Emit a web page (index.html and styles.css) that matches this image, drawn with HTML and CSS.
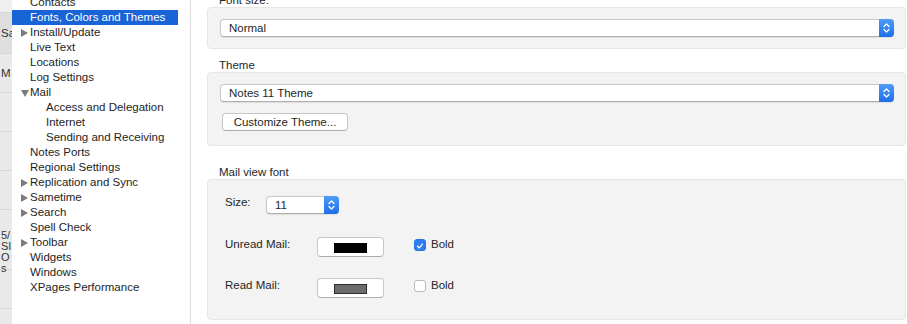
FILE: index.html
```html
<!DOCTYPE html>
<html>
	<head>
		<meta charset="utf-8">
		<title>Preferences</title>
		<link rel="stylesheet" href="styles.css">
	</head>
	<body>
		<div class="window">

			<!-- edge of the window behind -->
			<div class="behind">
				<div class="behind-row top"></div>
				<div class="behind-row tall"><span>Sa</span></div>
				<div class="behind-row"><span>M</span></div>
				<div class="behind-row"></div>
				<div class="behind-row"></div>
				<div class="behind-row"></div>
				<div class="behind-row text-block">
					<span>5/</span><span>SI</span><span>O</span><span>s</span>
				</div>
				<div class="behind-row"></div>
			</div>

			<nav class="tree">
				<div class="tree-row"><span class="twisty"></span>Contacts</div>
				<div class="tree-row selected"><span class="twisty"></span>Fonts, Colors and Themes</div>
				<div class="tree-row"><span class="twisty closed"></span>Install/Update</div>
				<div class="tree-row"><span class="twisty"></span>Live Text</div>
				<div class="tree-row"><span class="twisty"></span>Locations</div>
				<div class="tree-row"><span class="twisty"></span>Log Settings</div>
				<div class="tree-row"><span class="twisty open"></span>Mail</div>
				<div class="tree-row child"><span class="twisty"></span>Access and Delegation</div>
				<div class="tree-row child"><span class="twisty"></span>Internet</div>
				<div class="tree-row child"><span class="twisty"></span>Sending and Receiving</div>
				<div class="tree-row"><span class="twisty"></span>Notes Ports</div>
				<div class="tree-row"><span class="twisty"></span>Regional Settings</div>
				<div class="tree-row"><span class="twisty closed"></span>Replication and Sync</div>
				<div class="tree-row"><span class="twisty closed"></span>Sametime</div>
				<div class="tree-row"><span class="twisty closed"></span>Search</div>
				<div class="tree-row"><span class="twisty"></span>Spell Check</div>
				<div class="tree-row"><span class="twisty closed"></span>Toolbar</div>
				<div class="tree-row"><span class="twisty"></span>Widgets</div>
				<div class="tree-row"><span class="twisty"></span>Windows</div>
				<div class="tree-row"><span class="twisty"></span>XPages Performance</div>
			</nav>

			<main class="prefs">

				<section class="group">
					<div class="group-label">Font size:</div>
					<div class="group-box box-font">
						<div class="popup">
							<span class="popup-text">Normal</span>
							<span class="stepper">
								<svg width="15" height="18" viewBox="0 0 15 18"><path d="M5 7.5 L7.5 5 L10 7.5 M5 10.5 L7.5 13 L10 10.5" fill="none" stroke="#fff" stroke-width="1.3" stroke-linecap="round" stroke-linejoin="round"/></svg>
							</span>
						</div>
					</div>
				</section>

				<section class="group">
					<div class="group-label">Theme</div>
					<div class="group-box box-theme">
						<div class="popup">
							<span class="popup-text">Notes 11 Theme</span>
							<span class="stepper">
								<svg width="15" height="18" viewBox="0 0 15 18"><path d="M5 7.5 L7.5 5 L10 7.5 M5 10.5 L7.5 13 L10 10.5" fill="none" stroke="#fff" stroke-width="1.3" stroke-linecap="round" stroke-linejoin="round"/></svg>
							</span>
						</div>
						<div class="push-btn">Customize Theme...</div>
					</div>
				</section>

				<section class="group group-far">
					<div class="group-label">Mail view font</div>
					<div class="group-box box-mail">
						<div class="mail-row">
							<span class="row-label size-label">Size:</span>
							<div class="popup popup-small">
								<span class="popup-text">11</span>
								<span class="stepper">
									<svg width="15" height="18" viewBox="0 0 15 18"><path d="M5 7.5 L7.5 5 L10 7.5 M5 10.5 L7.5 13 L10 10.5" fill="none" stroke="#fff" stroke-width="1.3" stroke-linecap="round" stroke-linejoin="round"/></svg>
								</span>
							</div>
						</div>
						<div class="mail-row">
							<span class="row-label">Unread Mail:</span>
							<div class="color-btn"><span class="swatch swatch-black"></span></div>
							<span class="check checked">
								<svg width="12" height="12" viewBox="0 0 12 12"><path d="M3.2 6.2 L5.2 8.3 L8.9 3.8" fill="none" stroke="#fff" stroke-width="1.6" stroke-linecap="round" stroke-linejoin="round"/></svg>
							</span>
							<span class="check-label">Bold</span>
						</div>
						<div class="mail-row">
							<span class="row-label">Read Mail:</span>
							<div class="color-btn"><span class="swatch swatch-grey"></span></div>
							<span class="check"></span>
							<span class="check-label">Bold</span>
						</div>
					</div>
				</section>

			</main>
		</div>
	</body>
</html>
```

FILE: styles.css
```css
html, body{
	margin: 0;
	padding: 0;
	background: #ffffff;
}

body{
	font-family: "Liberation Sans", Arial, sans-serif;
	font-size: 11.5px;
	color: #222222;
}

.window{
	display: flex;
	width: 907px;
	height: 324px;
	overflow: hidden;
}

/* window behind, only a sliver shows */
.behind{
	width: 12px;
	flex: none;
	background: #e9e9e9;
	overflow: hidden;
	color: #333;
}

.behind-row{
	height: 38px;
	border-bottom: 1px solid #d6d6d6;
	display: flex;
	align-items: center;
	white-space: nowrap;
	padding-left: 1px;
}

.behind-row.top{
	height: 12px;
	background: #efefef;
}

.behind-row.tall{
	height: 40px;
	background: #dedede;
}

.behind-row.text-block{
	height: 60px;
	box-sizing: border-box;
	padding-top: 20px;
	flex-direction: column;
	align-items: flex-start;
	justify-content: flex-start;
	line-height: 11px;
	font-size: 11px;
}

/* sidebar tree */
.tree{
	width: 178px;
	flex: none;
	border-right: 1px solid #dedede;
	margin-top: -5px;
	height: 330px;
}

.tree-row{
	height: 15px;
	line-height: 15px;
	width: 166px;
	display: flex;
	align-items: center;
	padding-left: 9px;
	box-sizing: border-box;
	white-space: nowrap;
	color: #1e1e1e;
}

.tree-row.child{
	padding-left: 25px;
}

.tree-row.selected{
	background: #1863d6;
	color: #ffffff;
}

.twisty{
	width: 9px;
	height: 15px;
	flex: none;
	position: relative;
}

.twisty.closed::before{
	content: "";
	position: absolute;
	left: 0;
	top: 4px;
	border-left: 7px solid #7b7b7b;
	border-top: 4px solid transparent;
	border-bottom: 4px solid transparent;
}

.twisty.open::before{
	content: "";
	position: absolute;
	left: 0;
	top: 5px;
	border-top: 7px solid #7b7b7b;
	border-left: 4px solid transparent;
	border-right: 4px solid transparent;
}

/* right pane */
.prefs{
	flex: 1;
	padding: 0 1px 0 16px;
	margin-top: -9px;
}

.group{
	margin-bottom: 7px;
}

.group-far{
	margin-top: 17px;
}

.group-label{
	height: 16px;
	line-height: 18px;
	padding-left: 12px;
	color: #262626;
}

.group-box{
	background: #f3f3f3;
	border: 1px solid #e6e6e6;
	border-radius: 4px;
}

.box-font{
	padding: 11px 11px 11px 12px;
}

.box-theme{
	padding: 11px 11px 14px 12px;
}

.box-mail{
	padding: 14px 11px 20px 17px;
}

.popup{
	display: flex;
	height: 18px;
	background: #ffffff;
	border: 1px solid #c8c8c8;
	border-bottom-color: #adadad;
	border-radius: 4px;
	box-sizing: border-box;
	box-shadow: 0 0.5px 1px rgba(0, 0, 0, 0.08);
}

.popup-text{
	flex: 1;
	padding-left: 8px;
	line-height: 16px;
	color: #1f1f1f;
}

.stepper{
	width: 15px;
	height: 18px;
	margin: -1px -1px -1px 0;
	border-radius: 0 4px 4px 0;
	background: linear-gradient(#4f9bf7, #1d6fe8);
	display: flex;
}

.push-btn{
	width: 126px;
	height: 18px;
	margin: 11px 0 0 2px;
	box-sizing: border-box;
	background: #ffffff;
	border: 1px solid #c6c6c6;
	border-bottom-color: #ababab;
	border-radius: 4px;
	text-align: center;
	line-height: 16px;
	color: #1f1f1f;
}

.mail-row{
	display: flex;
	align-items: center;
	height: 22px;
	margin-bottom: 20px;
}

.mail-row:nth-child(2){
	margin-bottom: 19px;
}

.mail-row:last-child{
	margin-bottom: 0;
}

.row-label{
	width: 92px;
	flex: none;
	margin-bottom: 6px;
	color: #262626;
}

.row-label.size-label{
	width: 41px;
}

.popup-small{
	width: 73px;
}

.color-btn{
	width: 67px;
	height: 20px;
	box-sizing: border-box;
	background: #ffffff;
	border: 1px solid #c8c8c8;
	border-bottom-color: #adadad;
	border-radius: 4px;
	display: flex;
	align-items: center;
	justify-content: center;
}

.swatch{
	width: 33px;
	height: 10px;
	box-sizing: border-box;
	margin-top: 2px;
}

.swatch-black{
	background: #000000;
}

.swatch-grey{
	background: #6b6b6b;
	border: 1px solid #2e2e2e;
}

.check{
	width: 12px;
	height: 12px;
	box-sizing: border-box;
	margin: 0 5px 5px 30px;
	border: 1px solid #b9b9b9;
	border-radius: 3px;
	background: #ffffff;
	display: flex;
}

.check.checked{
	background: #2f7df6;
	border-color: #2a72e0;
}

.check-label{
	margin-bottom: 6px;
	color: #262626;
}
```
